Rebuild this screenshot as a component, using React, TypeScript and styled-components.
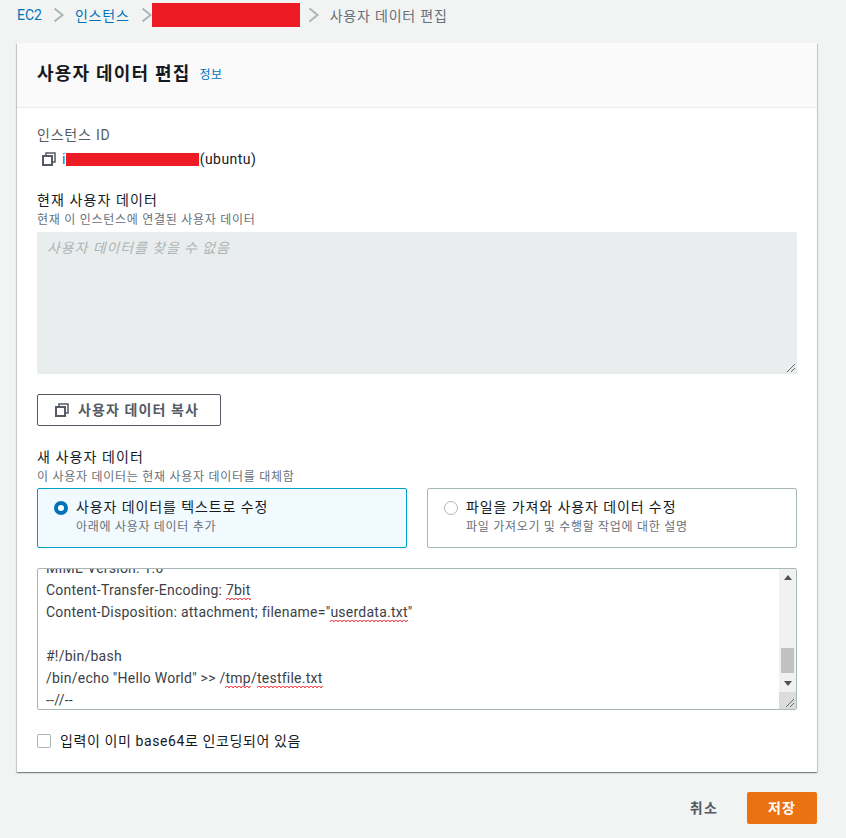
import React from "react";
import styled, { createGlobalStyle } from "styled-components";

const GlobalStyle = createGlobalStyle`
  html, body {
    margin: 0;
    padding: 0;
    height: 838px;
    overflow: hidden;
    background: #f2f3f3;
    font-family: Roboto, "Noto Sans CJK KR", sans-serif;
    font-size: 14px;
    color: #16191f;
  }
  * { box-sizing: border-box; }
`;

const Page = styled.div`
  width: 846px;
  height: 838px;
  padding: 0 29px 0 17px;
`;

const Breadcrumbs = styled.nav`
  display: flex;
  align-items: center;
  height: 27px;
  margin-bottom: 16px;
  padding-top: 3px;
  font-size: 14px;
  letter-spacing: 0.8px;
`;

const Crumb = styled.span<{ $current?: boolean }>`
  color: ${({ $current }) => ($current ? "#687078" : "#0073bb")};
`;

const RootCrumb = styled(Crumb)`
  letter-spacing: 0;
`;

const Chevron = styled.svg`
  flex: none;
  width: 12px;
  height: 16px;
  margin: 0 10px 0 11px;
`;

const Redaction = styled.span<{ $w: number; $h: number }>`
  display: inline-block;
  flex: none;
  width: ${({ $w }) => $w}px;
  height: ${({ $h }) => $h}px;
  background: #ed1c24;
`;

const CrumbRedaction = styled(Redaction)`
  margin: 0 -3px 0 -11px;
`;

const Card = styled.section`
  height: 729px;
  background: #fff;
  box-shadow: 0 1px 1px 0 rgba(0, 28, 36, 0.3), 1px 1px 1px 0 rgba(0, 28, 36, 0.15), -1px 1px 1px 0 rgba(0, 28, 36, 0.15);
`;

const CardHeader = styled.header`
  display: flex;
  align-items: center;
  gap: 9px;
  height: 65px;
  padding: 0 20px 6px;
  background: #fafafa;
  border-bottom: 1px solid #eaeded;
`;

const Title = styled.h1`
  margin: 0;
  font-size: 18px;
  font-weight: 700;
  letter-spacing: 1.2px;
  color: #16191f;
`;

const InfoLink = styled.a`
  margin-top: 3px;
  font-size: 12px;
  letter-spacing: 0.5px;
  color: #0073bb;
`;

const CardBody = styled.div`
  display: flex;
  flex-direction: column;
  padding: 17px 20px 0;
`;

const MutedLabel = styled.div`
  font-size: 14px;
  line-height: 20px;
  letter-spacing: 0.8px;
  color: #545b64;
`;

const InstanceRow = styled.div`
  display: flex;
  align-items: center;
  height: 20px;
  margin-top: 4px;
  padding-left: 5px;
  font-size: 14px;
  color: #16191f;
`;

const InstanceId = styled.span`
  margin-left: 6px;
  letter-spacing: 0.24px;
  color: #0073bb;
`;

const InstanceName = styled.span`
  margin-left: 1px;
  letter-spacing: 0.45px;
`;

const FieldLabel = styled.div`
  font-size: 14px;
  line-height: 20px;
  letter-spacing: 1.1px;
  color: #16191f;
`;

const FieldHint = styled.div`
  margin-top: 2px;
  font-size: 12px;
  line-height: 16px;
  letter-spacing: 0.73px;
  color: #687078;
`;

const CurrentLabel = styled(FieldLabel)`
  margin-top: 21px;
`;

const EmptyArea = styled.div`
  position: relative;
  height: 142px;
  margin-top: 4px;
  padding: 6px 10px;
  background: #eaeded;
  border-radius: 2px;
  font-size: 14px;
  line-height: 20px;
  letter-spacing: 0.9px;
  font-style: italic;
  color: #aab7b8;
`;

const Grip = styled.svg`
  position: absolute;
  right: 1px;
  bottom: 1px;
  width: 10px;
  height: 10px;
`;

const CopyButton = styled.button`
  display: flex;
  align-items: center;
  gap: 9px;
  align-self: flex-start;
  width: 184px;
  height: 32px;
  margin-top: 20px;
  padding: 0 0 0 17px;
  background: #fff;
  border: 1px solid #545b64;
  border-radius: 2px;
  font-family: inherit;
  font-size: 14px;
  font-weight: 700;
  letter-spacing: 1.1px;
  color: #545b64;
`;

const CopyButtonLabel = styled.span`
  margin-top: -3px;
`;

const NewLabel = styled(FieldLabel)`
  margin-top: 21px;
`;

const Options = styled.div`
  display: grid;
  grid-template-columns: 370px 370px;
  gap: 20px;
  margin-top: 3px;
`;

const OptionCard = styled.label<{ $active?: boolean }>`
  display: flex;
  gap: 8px;
  height: 60px;
  padding: 8px 16px;
  background: ${({ $active }) => ($active ? "#f1faff" : "#fff")};
  border: 1px solid ${({ $active }) => ($active ? "#00a1c9" : "#aab7b8")};
  border-radius: 2px;
`;

const Radio = styled.span<{ $active?: boolean }>`
  flex: none;
  width: 14px;
  height: 14px;
  margin-top: 4px;
  border-radius: 50%;
  background: #fff;
  border: ${({ $active }) => ($active ? "4px solid #0073bb" : "1px solid #aab7b8")};
`;

const OptionText = styled.div`
  display: flex;
  flex-direction: column;
`;

const OptionTitle = styled.span`
  font-size: 14px;
  line-height: 20px;
  letter-spacing: 0.9px;
  color: #16191f;
`;

const OptionHint = styled.span`
  margin-top: 2px;
  font-size: 12px;
  line-height: 16px;
  letter-spacing: 0.7px;
  color: #687078;
`;

const Editor = styled.div`
  position: relative;
  display: flex;
  height: 142px;
  margin-top: 20px;
  background: #fff;
  border: 1px solid #aab7b8;
  border-radius: 2px;
`;

const CodeView = styled.div`
  flex: 1;
  display: flex;
  flex-direction: column;
  justify-content: flex-end;
  overflow: hidden;
  padding: 0 8px;
  font-size: 14px;
  letter-spacing: 0.24px;
`;

const CodeLine = styled.div`
  flex: none;
  height: 22px;
  padding-top: 2px;
  line-height: 22px;
  white-space: pre;
  color: #3c4148;
`;

const Misspelt = styled.span`
  padding-bottom: 2px;
  background-image:
    linear-gradient(45deg, transparent 55%, #e5202a 70%, transparent 90%),
    linear-gradient(135deg, transparent 10%, #e5202a 30%, transparent 45%);
  background-size: 4px 2px;
  background-repeat: repeat-x;
  background-position: left bottom;
`;

const ScrollTrack = styled.div`
  flex: none;
  display: flex;
  flex-direction: column;
  align-items: center;
  width: 17px;
  background: #f1f1f1;
`;

const ScrollArrow = styled.svg`
  flex: none;
  width: 8px;
  height: 5px;
  margin: 6px 0;
`;

const ScrollGap = styled.div`
  flex: 1;
`;

const ScrollThumb = styled.div`
  flex: none;
  width: 13px;
  height: 25px;
  margin-bottom: 2px;
  background: #c1c1c1;
`;

const ScrollCorner = styled.div`
  position: relative;
  flex: none;
  width: 17px;
  height: 17px;
  background: #dcdcdc;
`;

const CheckRow = styled.label`
  display: flex;
  align-items: center;
  gap: 9px;
  margin-top: 21px;
  font-size: 14px;
  line-height: 20px;
  letter-spacing: 0.6px;
  color: #16191f;
`;

const CheckBox = styled.span`
  flex: none;
  width: 14px;
  height: 14px;
  background: #fff;
  border: 1px solid #aab7b8;
  border-radius: 2px;
`;

const Footer = styled.footer`
  display: flex;
  justify-content: flex-end;
  align-items: center;
  gap: 29px;
  margin-top: 20px;
`;

const CancelButton = styled.button`
  padding: 0 0 3px;
  background: none;
  border: none;
  font-family: inherit;
  font-size: 14px;
  font-weight: 700;
  letter-spacing: 1.2px;
  color: #545b64;
`;

const SaveButton = styled.button`
  width: 70px;
  height: 32px;
  padding: 0 0 3px;
  background: #ec7211;
  border: none;
  border-radius: 2px;
  font-family: inherit;
  font-size: 14px;
  font-weight: 700;
  letter-spacing: 1.2px;
  color: #fff;
`;

const CrumbChevron = () => (
  <Chevron viewBox="0 0 12 16">
    <path d="M1.5 1.5l8 6.5-8 6.5" fill="none" stroke="#aab7b8" strokeWidth="2" />
  </Chevron>
);

const CopyIcon = () => (
  <svg width="14" height="14" viewBox="0 0 14 14" fill="none" stroke="#545b64" strokeWidth="2" style={{ flex: "none" }}>
    <rect x="1" y="4" width="9" height="9" />
    <path d="M4 3.5V1h9v9h-2.5" strokeWidth="1.5" />
  </svg>
);

const ResizeGrip = () => (
  <Grip viewBox="0 0 10 10">
    <path d="M1 9l8-8M5 9l4-4" stroke="#6b6b6b" strokeWidth="1" />
  </Grip>
);

const App = () => {
  return (
    <Page>
      <GlobalStyle />
      <Breadcrumbs>
        <RootCrumb>EC2</RootCrumb>
        <CrumbChevron />
        <Crumb>인스턴스</Crumb>
        <CrumbChevron />
        <CrumbRedaction $w={148} $h={24} />
        <CrumbChevron />
        <Crumb $current>사용자 데이터 편집</Crumb>
      </Breadcrumbs>

      <Card>
        <CardHeader>
          <Title>사용자 데이터 편집</Title>
          <InfoLink>정보</InfoLink>
        </CardHeader>
        <CardBody>
          <MutedLabel>인스턴스 ID</MutedLabel>
          <InstanceRow>
            <CopyIcon />
            <InstanceId>i</InstanceId>
            <Redaction $w={133} $h={13} />
            <InstanceName>(ubuntu)</InstanceName>
          </InstanceRow>

          <CurrentLabel>현재 사용자 데이터</CurrentLabel>
          <FieldHint>현재 이 인스턴스에 연결된 사용자 데이터</FieldHint>
          <EmptyArea>
            사용자 데이터를 찾을 수 없음
            <ResizeGrip />
          </EmptyArea>

          <CopyButton>
            <CopyIcon />
            <CopyButtonLabel>사용자 데이터 복사</CopyButtonLabel>
          </CopyButton>

          <NewLabel>새 사용자 데이터</NewLabel>
          <FieldHint>이 사용자 데이터는 현재 사용자 데이터를 대체함</FieldHint>
          <Options>
            <OptionCard $active>
              <Radio $active />
              <OptionText>
                <OptionTitle>사용자 데이터를 텍스트로 수정</OptionTitle>
                <OptionHint>아래에 사용자 데이터 추가</OptionHint>
              </OptionText>
            </OptionCard>
            <OptionCard>
              <Radio />
              <OptionText>
                <OptionTitle>파일을 가져와 사용자 데이터 수정</OptionTitle>
                <OptionHint>파일 가져오기 및 수행할 작업에 대한 설명</OptionHint>
              </OptionText>
            </OptionCard>
          </Options>

          <Editor>
            <CodeView>
              <CodeLine>MIME-Version: 1.0</CodeLine>
              <CodeLine>
                Content-Transfer-Encoding: <Misspelt>7bit</Misspelt>
              </CodeLine>
              <CodeLine>
                Content-Disposition: attachment; filename="<Misspelt>userdata.txt</Misspelt>"
              </CodeLine>
              <CodeLine> </CodeLine>
              <CodeLine>#!/bin/bash</CodeLine>
              <CodeLine>
                /bin/echo "Hello World" {">>"} /<Misspelt>tmp</Misspelt>/<Misspelt>testfile.txt</Misspelt>
              </CodeLine>
              <CodeLine>--//--</CodeLine>
            </CodeView>
            <ScrollTrack>
              <ScrollArrow viewBox="0 0 8 5">
                <path d="M4 0l4 5H0z" fill="#505050" />
              </ScrollArrow>
              <ScrollGap />
              <ScrollThumb />
              <ScrollArrow viewBox="0 0 8 5">
                <path d="M0 0h8L4 5z" fill="#505050" />
              </ScrollArrow>
              <ScrollCorner>
                <ResizeGrip />
              </ScrollCorner>
            </ScrollTrack>
          </Editor>

          <CheckRow>
            <CheckBox />
            입력이 이미 base64로 인코딩되어 있음
          </CheckRow>
        </CardBody>
      </Card>

      <Footer>
        <CancelButton>취소</CancelButton>
        <SaveButton>저장</SaveButton>
      </Footer>
    </Page>
  );
};

export default App;
